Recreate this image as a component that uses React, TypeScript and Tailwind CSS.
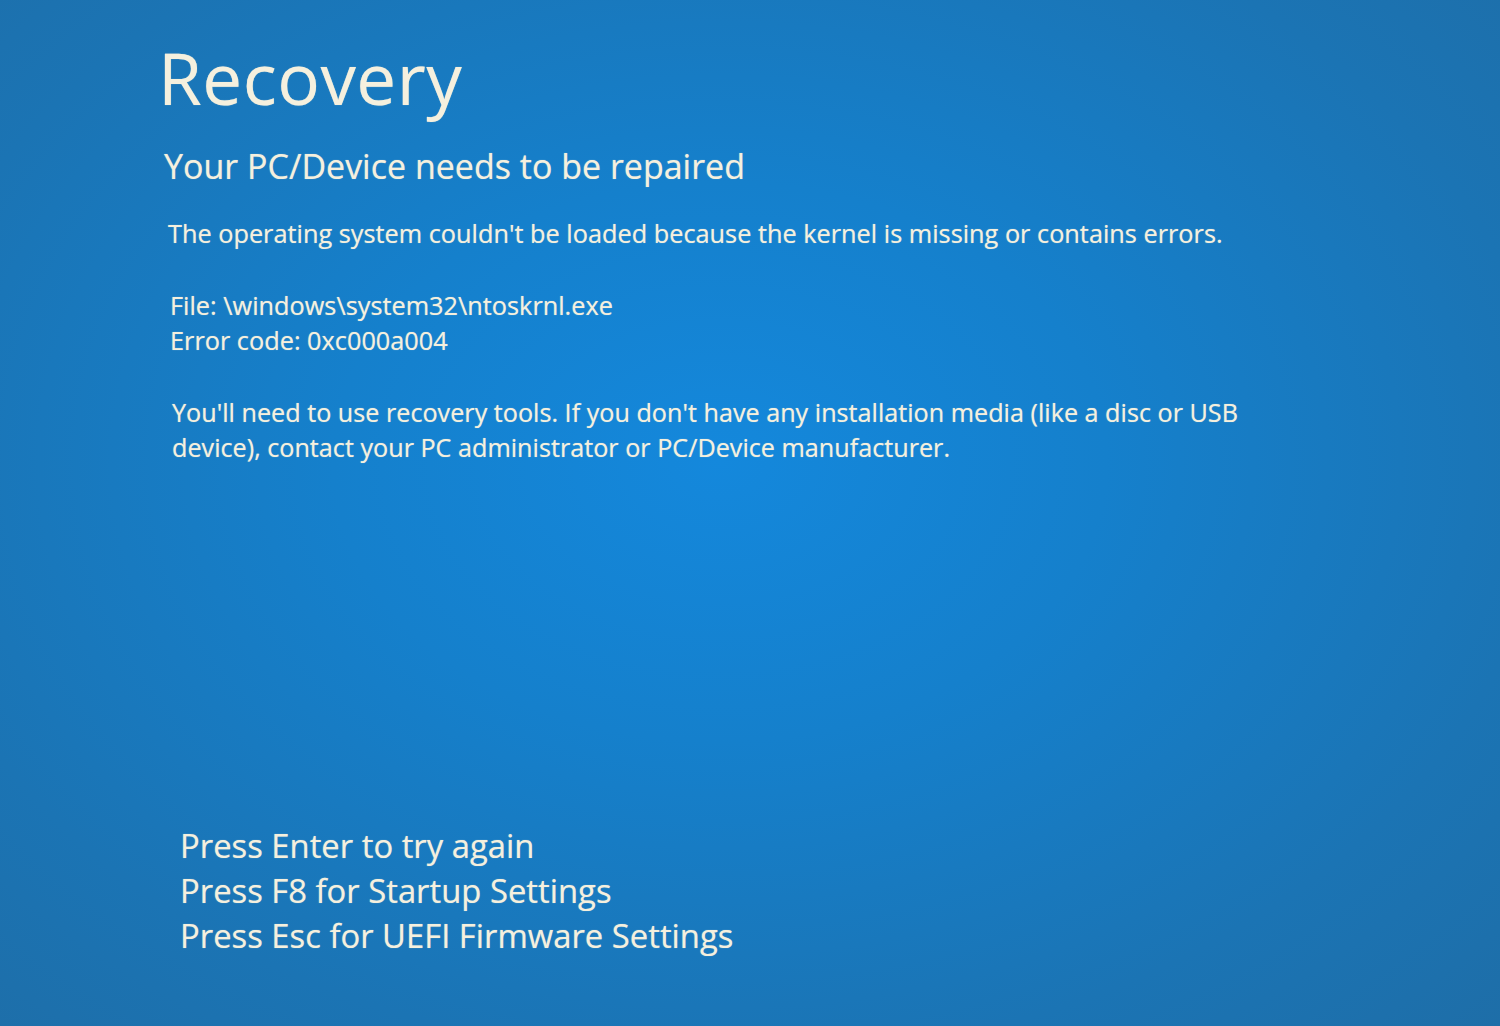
export default function App() {
  return (
    <div
      className="flex h-[1026px] w-full flex-col overflow-hidden bg-[radial-gradient(ellipse_at_48%_45%,#1488dc_0%,#1580cc_35%,#1b74b4_75%,#1e6ea8_100%)] text-[#f5f0de] [text-shadow:0_0_1px_rgba(255,248,225,0.55)]"
      style={{ fontFamily: '"Open Sans", "Noto Sans", sans-serif' }}
    >
      <div className="pl-[158px] pt-[36px]">
        <h1 className="text-[71px] leading-[84px] tracking-[0.5px]">Recovery</h1>
        <h2 className="mt-[24px] pl-[6px] text-[34px] leading-[44px]">Your PC/Device needs to be repaired</h2>

        <p className="mt-[28px] pl-[10px] text-[25.3px] leading-[35px]">
          The operating system couldn't be loaded because the kernel is missing or contains errors.
        </p>

        <div className="mt-[37px] pl-[12px] text-[25.3px] leading-[35px]">
          <p>File: \windows\system32\ntoskrnl.exe</p>
          <p>Error code: 0xc000a004</p>
        </div>

        <p className="mt-[37px] max-w-[1200px] pl-[14px] text-[25.2px] leading-[35px]">
          You'll need to use recovery tools. If you don't have any installation media (like a disc or USB
          <br />
          device), contact your PC administrator or PC/Device manufacturer.
        </p>
      </div>

      <div className="mt-auto pb-[68px] pl-[180px] text-[32.8px] leading-[45px]">
        <p>Press Enter to try again</p>
        <p>Press F8 for Startup Settings</p>
        <p>Press Esc for UEFI Firmware Settings</p>
      </div>
    </div>
  )
}
